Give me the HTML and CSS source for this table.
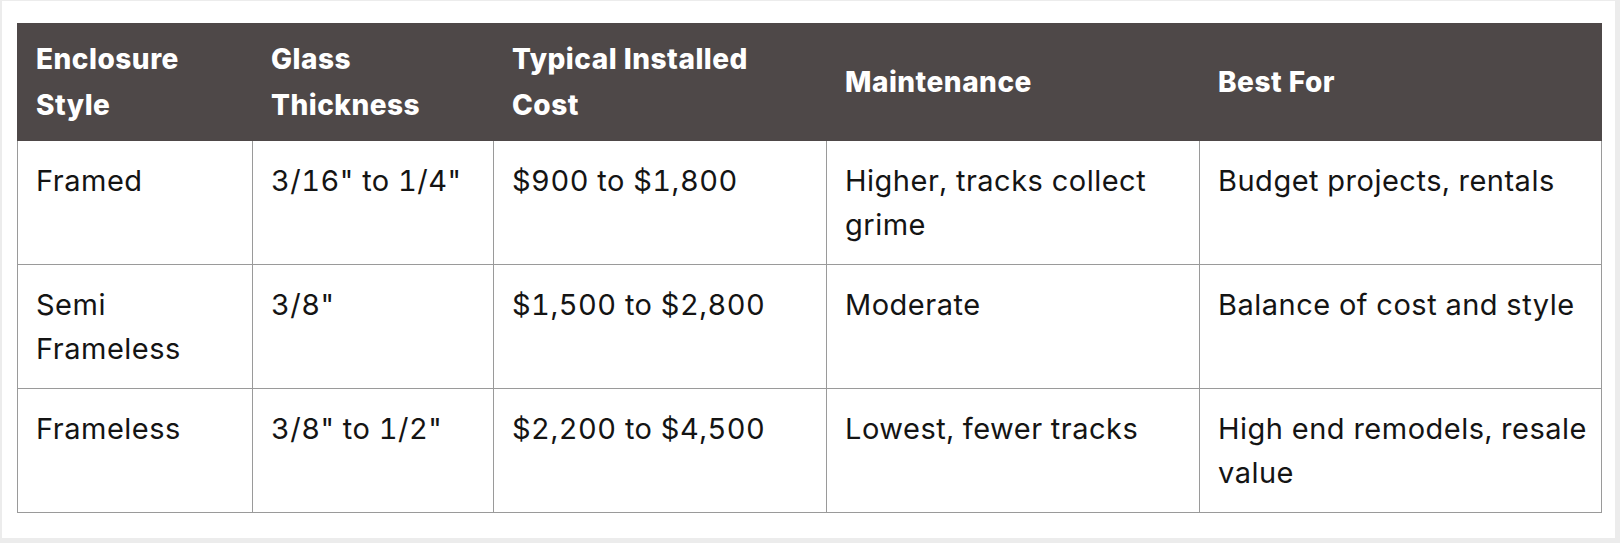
FILE: index.html
```html
<!DOCTYPE html>
<html lang="en">
<head>
<meta charset="utf-8">
<title>Shower Enclosure Comparison</title>
<link rel="stylesheet" href="styles.css">
</head>
<body>
<div class="card">
  <table class="compare">
    <colgroup>
      <col class="c1"><col class="c2"><col class="c3"><col class="c4"><col class="c5">
    </colgroup>
    <thead>
      <tr>
        <th>Enclosure Style</th>
        <th>Glass Thickness</th>
        <th>Typical Installed Cost</th>
        <th>Maintenance</th>
        <th>Best For</th>
      </tr>
    </thead>
    <tbody>
      <tr>
        <td>Framed</td>
        <td>3/16" to 1/4"</td>
        <td>$900 to $1,800</td>
        <td>Higher, tracks collect grime</td>
        <td>Budget projects, rentals</td>
      </tr>
      <tr>
        <td>Semi Frameless</td>
        <td>3/8"</td>
        <td>$1,500 to $2,800</td>
        <td>Moderate</td>
        <td>Balance of cost and style</td>
      </tr>
      <tr>
        <td>Frameless</td>
        <td>3/8" to 1/2"</td>
        <td>$2,200 to $4,500</td>
        <td>Lowest, fewer tracks</td>
        <td>High end remodels, resale value</td>
      </tr>
    </tbody>
  </table>
</div>
</body>
</html>
```

FILE: styles.css
```css
html, body {
  margin: 0;
  padding: 0;
  background: #ececec;
}
body {
  padding: 1px 5px 3px 2px;
  font-family: Inter, "Liberation Sans", Arial, sans-serif;
  color: #141414;
}
.card {
  background: #ffffff;
  padding: 22px 14px 25px 15px;
}
.compare {
  border-collapse: collapse;
  table-layout: fixed;
  width: 1584px;
  border: 1px solid #8e8e8e;
}
.c1 { width: 235px; }
.c2 { width: 241px; }
.c3 { width: 333px; }
.c4 { width: 373px; }
.c5 { width: 402px; }
.compare th {
  background: #4e4848;
  color: #ffffff;
  font-weight: 800;
  font-size: 28px;
  line-height: 46px;
  letter-spacing: 0.5px;
  text-align: left;
  vertical-align: middle;
  padding: 12px 18px 12px;
  border: 1px solid #4e4848;
}
.compare td {
  font-size: 29px;
  line-height: 44px;
  letter-spacing: 0.5px;
  font-variant-numeric: tabular-nums;
  vertical-align: top;
  padding: 18px 6px 17px 18px;
  border: 1px solid #9a9a9a;
}
```
